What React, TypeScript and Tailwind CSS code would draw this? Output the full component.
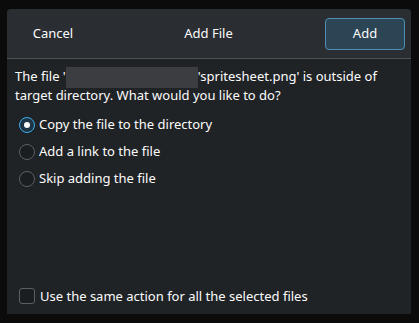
export default function App() {
  const options = [
    'Copy the file to the directory',
    'Add a link to the file',
    'Skip adding the file',
  ];
  const selected = 0;

  return (
    <div className="w-[419px] h-[323px] bg-[#0b0b0c] pt-[9px] pl-[7px] font-['Noto_Sans',sans-serif] text-[13px] text-[#fcfcfc]">
      <div className="w-[404px] h-[305px] flex flex-col rounded-t-[4px] overflow-hidden bg-[#202326]">
        {/* header */}
        <div className="h-[50px] flex items-center bg-[#2a2e32] border-b border-[#4d5156] shrink-0">
          <button className="w-[78px] ml-[7px] h-[32px] text-center">Cancel</button>
          <div className="flex-1 text-center">Add File</div>
          <button className="w-[80px] h-[32px] mr-[6px] rounded-[4px] border border-[#4f8fb3] bg-[#2c4555]">Add</button>
        </div>

        {/* body */}
        <div className="flex-1 flex flex-col px-[8px] pt-[8px] pb-[8px]">
          <p className="leading-[19px]">
            The file '
            <span className="inline-block align-top w-[132px] h-[21px] -mb-[2px] bg-[#3b3d40] blur-[0.5px]" />
            'spritesheet.png' is outside of target directory. What would you like to do?
          </p>

          <div className="flex flex-col mt-[6px] pl-[4px]">
            {options.map((label, i) => (
              <div key={label} className="h-[27px] flex items-center gap-[4px]">
                {i === selected ? (
                  <span className="w-[16px] h-[16px] rounded-full border border-[#3daee9] bg-[#1d3444] flex items-center justify-center">
                    <span className="w-[6px] h-[6px] rounded-full bg-[#fcfcfc]" />
                  </span>
                ) : (
                  <span className="w-[16px] h-[16px] rounded-full border border-[#5b5f63] bg-[#1b1e20]" />
                )}
                <span>{label}</span>
              </div>
            ))}
          </div>

          <div className="mt-auto flex items-center gap-[5px] pl-[4px]">
            <span className="w-[16px] h-[16px] rounded-[3px] border border-[#5b5f63] bg-[#1b1e20]" />
            <span>Use the same action for all the selected files</span>
          </div>
        </div>
      </div>
    </div>
  );
}
